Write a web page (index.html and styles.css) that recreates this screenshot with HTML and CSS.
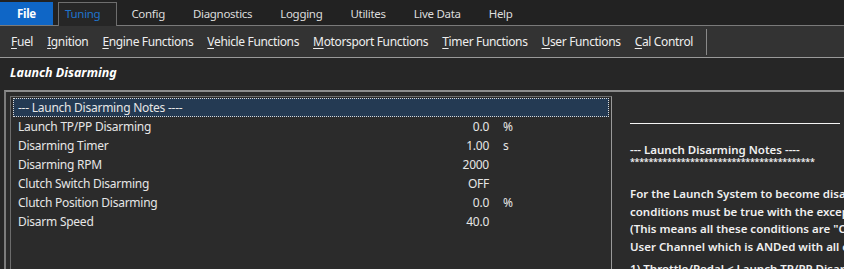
FILE: index.html
```html
<!DOCTYPE html>
<html lang="en">
  <head>
    <meta charset="UTF-8" />
    <title>Launch Disarming</title>
    <link rel="stylesheet" href="styles.css">
  </head>
  <body>
    <div class="menubar">
      <div class="file">File</div>
      <div class="tab active">Tuning</div>
      <div class="tab">Config</div>
      <div class="tab">Diagnostics</div>
      <div class="tab">Logging</div>
      <div class="tab">Utilites</div>
      <div class="tab">Live Data</div>
      <div class="tab">Help</div>
    </div>
    <div class="toolbar">
      <span class="tool"><u>F</u>uel</span>
      <span class="tool"><u>I</u>gnition</span>
      <span class="tool"><u>E</u>ngine Functions</span>
      <span class="tool"><u>V</u>ehicle Functions</span>
      <span class="tool"><u>M</u>otorsport Functions</span>
      <span class="tool"><u>T</u>imer Functions</span>
      <span class="tool"><u>U</u>ser Functions</span>
      <span class="tool"><u>C</u>al Control</span>
      <span class="sep"></span>
    </div>
    <div class="title">Launch Disarming</div>
    <div class="frame">
      <div class="list">
        <div class="row selected"><span class="label">--- Launch Disarming Notes ----</span></div>
        <div class="row"><span class="label">Launch TP/PP Disarming</span><span class="value">0.0</span><span class="unit">%</span></div>
        <div class="row"><span class="label">Disarming Timer</span><span class="value">1.00</span><span class="unit">s</span></div>
        <div class="row"><span class="label">Disarming RPM</span><span class="value">2000</span><span class="unit"></span></div>
        <div class="row"><span class="label">Clutch Switch Disarming</span><span class="value">OFF</span><span class="unit"></span></div>
        <div class="row"><span class="label">Clutch Position Disarming</span><span class="value">0.0</span><span class="unit">%</span></div>
        <div class="row"><span class="label">Disarm Speed</span><span class="value">40.0</span><span class="unit"></span></div>
      </div>
      <div class="notes">
        <div class="rule"></div>
        <div class="heading">--- Launch Disarming Notes ----</div>
        <div class="stars">****************************************</div>
        <p>For the Launch System to become disarmed all of the following<br>conditions must be true with the exception of the User Channel.<br>(This means all these conditions are "OR"ed together except the<br>User Channel which is ANDed with all of them.)</p>
        <p>1) Throttle/Pedal &lt; Launch TP/PP Disarming</p>
      </div>
    </div>
  </body>
</html>
```

FILE: styles.css
```css
body {
  margin: 0;
  font-family: "Segoe UI", "Noto Sans", sans-serif;
  background: #262626;
  color: #e6e6e6;
  height: 100vh;
  display: flex;
  flex-direction: column;
  overflow: hidden;
}
.menubar {
  height: 25px;
  background: #222;
  border-bottom: 1px solid #7a7a7a;
  display: flex;
  align-items: flex-end;
  font-size: 11.5px;
  letter-spacing: -0.3px;
  flex-shrink: 0;
}
.file {
  width: 53px;
  height: 23px;
  line-height: 23px;
  text-align: center;
  background: #0f66c6;
  color: #fff;
  font-weight: bold;
}
.tab {
  height: 22px;
  line-height: 22px;
  padding: 0 13px;
  color: #ddd;
  border: 1px solid transparent;
  border-bottom: none;
}
.tab.active {
  margin-left: 5px;
  padding: 0 16px 0 6px;
  color: #1f74cc;
  background: #262626;
  border-color: #6e6e6e;
  margin-bottom: -1px;
  height: 23px;
}
.toolbar {
  height: 31px;
  background: #333;
  border-bottom: 1px solid #9a9a9a;
  display: flex;
  align-items: center;
  gap: 14px;
  padding-left: 11px;
  font-size: 12px;
  letter-spacing: -0.35px;
  color: #eee;
  flex-shrink: 0;
}
.tool u {
  text-decoration-thickness: 1px;
  text-underline-offset: 2px;
}
.sep {
  width: 1px;
  height: 26px;
  background: #8a8a8a;
  margin-left: -1px;
}
.title {
  height: 32px;
  line-height: 30px;
  padding-left: 10px;
  font-size: 12.5px;
  font-weight: bold;
  font-style: italic;
  color: #fff;
  flex-shrink: 0;
}
.frame {
  flex-grow: 1;
  display: flex;
  margin-left: 4px;
  padding: 4px 0 0 4px;
  border-top: 2px solid #8c8c8c;
  border-left: 2px solid #7c7c7c;
  background: #2b2b2b;
}
.list {
  width: 596px;
  flex-shrink: 0;
  padding: 1px 2px 0 2px;
  border-top: 1px solid #6c6c6c;
  border-left: 1px solid #6c6c6c;
  border-right: 1px solid #9a9a9a;
  background: #2b2b2b;
  font-size: 12px;
  letter-spacing: -0.25px;
}
.row {
  height: 17px;
  line-height: 17px;
  border: 1px solid transparent;
  padding-left: 4px;
  display: grid;
  grid-template-columns: 1fr 78px 119px;
}
.row.selected {
  background: #243a53;
  border: 1px dotted #d8d8d8;
}
.value {
  text-align: right;
}
.unit {
  padding-left: 14px;
}
.notes {
  flex-grow: 1;
  min-width: 0;
  padding: 27px 0 0 18px;
  font-size: 11.5px;
  font-weight: 600;
  color: #f0f0f0;
  white-space: nowrap;
  overflow: hidden;
}
.rule {
  width: 210px;
  height: 1px;
  background: #f4f4f4;
  margin-bottom: 18px;
}
.heading {
  line-height: 15px;
}
.stars {
  font-size: 9px;
  line-height: 10px;
  letter-spacing: -0.3px;
}
.notes p {
  margin: 18px 0 0 0;
  line-height: 17.5px;
}
.notes p + p {
  margin-top: 5px;
}
```
